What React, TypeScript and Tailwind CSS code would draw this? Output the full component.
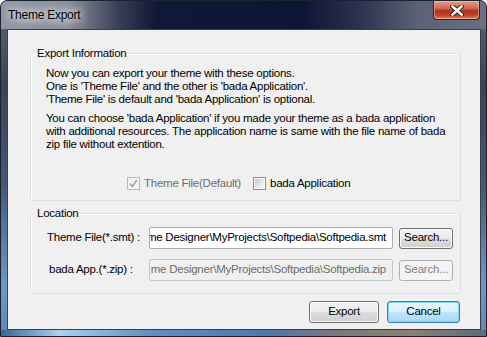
import React from 'react';

const font = "font-['Liberation_Sans',Arial,sans-serif] tracking-[-0.25px]";

function WinButton({ label, primary, disabled, className }: { label: string; primary?: boolean; disabled?: boolean; className: string }) {
  let look =
    'border-[#707070] text-black bg-[linear-gradient(to_bottom,#f2f2f2_0%,#ebebeb_49%,#dddddd_51%,#cfcfcf_100%)] shadow-[inset_0_0_0_1px_#fafafa]';
  if (primary)
    look =
      'border-[#3c7fb1] text-black bg-[linear-gradient(to_bottom,#eaf6fd_0%,#d9f0fc_49%,#bee6fd_51%,#a7d9f5_100%)] shadow-[inset_0_0_0_1px_#7fd3f7]';
  if (disabled) look = 'border-[#adb2b5] text-[#838383] bg-[#f4f4f4]';
  return (
    <div className={`flex items-center justify-center rounded-[3px] border text-[11.5px] ${look} ${className}`}>
      {label}
    </div>
  );
}

function CheckBox({ checked, disabled }: { checked?: boolean; disabled?: boolean }) {
  if (disabled) {
    return (
      <span className="flex h-[13px] w-[13px] items-center justify-center border border-[#bcbcbc] bg-[#f4f4f4]">
        {checked && (
          <svg width="9" height="9" viewBox="0 0 9 9">
            <path d="M1 4.5 L3.5 7.5 L8 1" fill="none" stroke="#a4a4a4" strokeWidth="1.6" />
          </svg>
        )}
      </span>
    );
  }
  return (
    <span className="block h-[13px] w-[13px] border border-[#8e8f8f] bg-white p-[1px]">
      <span className="block h-full w-full bg-[linear-gradient(135deg,#c4c7cc_0%,#eeeeee_70%,#f6f6f6_100%)]" />
    </span>
  );
}

function PathField({ text, disabled }: { text: string; disabled?: boolean }) {
  return (
    <div
      className={`flex h-[22px] w-[244px] shrink-0 items-center justify-end overflow-hidden whitespace-nowrap rounded-[2px] border pr-[6px] ${
        disabled ? 'border-[#c3c7ca] bg-[#f0f0f0] text-[#6d6d6d]' : 'border-[#abadb3] bg-white text-black'
      }`}
    >
      {text}
    </div>
  );
}

export default function App() {
  return (
    <div className={`h-[337px] w-[487px] bg-white text-[11.5px] ${font}`}>
      <div className="flex h-full flex-col overflow-hidden rounded-t-[7px] border border-[#1c2230] bg-[linear-gradient(to_bottom,#616674_0%,#3c4356_25%,#44587a_55%,#6e99c6_85%,#5d88b6_100%)]">
        {/* title bar */}
        <div className="flex h-[28px] items-start justify-between bg-[linear-gradient(to_right,#9296a2_0%,#8a8e9b_14%,#3a4058_24%,#0f1836_32%,#0c1533_62%,#2b3350_74%,#5c6276_86%,#6a6f82_100%)]">
          <div className="mt-[6px] pl-[7px] text-[12px] leading-[16px] text-black [text-shadow:0_0_6px_#e8eaee,0_0_10px_#e8eaee,0_0_14px_#d8dae0]">
            Theme Export
          </div>
          <div className="mr-[6px] flex h-[19px] w-[47px] items-center justify-center rounded-b-[4px] border border-t-0 border-[#4a1a12] bg-[linear-gradient(to_bottom,#e3a08e_0%,#cf6a52_40%,#b4301b_55%,#c0462a_80%,#de8a62_100%)] shadow-[inset_0_0_0_1px_rgba(255,220,200,0.45)]">
            <svg width="14" height="11" viewBox="0 0 14 11">
              <path d="M2.5 1.5 L11.5 9.5 M11.5 1.5 L2.5 9.5" stroke="#3a1a14" strokeWidth="4.6" strokeLinecap="square" />
              <path d="M2.5 1.5 L11.5 9.5 M11.5 1.5 L2.5 9.5" stroke="#ffffff" strokeWidth="2.6" strokeLinecap="square" />
            </svg>
          </div>
        </div>

        {/* client area */}
        <div className="flex pl-[6px] pr-[5px]">
          <div className="h-[301px] w-[474px] border border-[#3a3f4c] bg-[#f0f0f0] text-black">
            <fieldset className="ml-[22px] mt-[16px] w-[431px] rounded-[3px] border border-[#d5dfe5] shadow-[inset_1px_1px_0_#ffffff]">
              <legend className="ml-[3px] px-[3px] leading-[14px]">Export Information</legend>
              <div className="pb-[9px] pl-[15px] pt-[7px] leading-[13px]">
                <p className="whitespace-nowrap">
                  Now you can export your theme with these options.
                  <br />
                  One is 'Theme File' and the other is 'bada Application'.
                  <br />
                  'Theme File' is default and 'bada Application' is optional.
                </p>
                <p className="mt-[6px] whitespace-nowrap">
                  You can choose 'bada Application' if you made your theme as a bada application
                  <br />
                  with additional resources. The application name is same with the file name of bada
                  <br />
                  zip file without extention.
                </p>
                <div className="mt-[25px] flex h-[15px] items-center pl-[81px]">
                  <div className="flex w-[126px] items-center gap-[4px]">
                    <CheckBox checked disabled />
                    <span className="text-[#6d6d6d]">Theme File(Default)</span>
                  </div>
                  <div className="flex items-center gap-[4px]">
                    <CheckBox />
                    <span>bada Application</span>
                  </div>
                </div>
              </div>
            </fieldset>

            <fieldset className="ml-[22px] mt-[5px] w-[431px] rounded-[3px] border border-[#d5dfe5] shadow-[inset_1px_1px_0_#ffffff]">
              <legend className="ml-[3px] px-[3px] leading-[14px]">Location</legend>
              <div className="pb-[12px] pl-[16px] pt-[7px]">
                <div className="flex items-center">
                  <span className="w-[102px] shrink-0 whitespace-nowrap">Theme File(*.smt) :</span>
                  <PathField text="me Designer\MyProjects\Softpedia\Softpedia.smt" />
                  <WinButton label="Search..." className="ml-[6px] h-[21px] w-[54px]" />
                </div>
                <div className="mt-[10px] flex items-center">
                  <span className="w-[102px] shrink-0 whitespace-nowrap pl-[2px]">bada App.(*.zip) :</span>
                  <PathField disabled text="me Designer\MyProjects\Softpedia\Softpedia.zip" />
                  <WinButton label="Search..." disabled className="ml-[6px] h-[21px] w-[54px]" />
                </div>
              </div>
            </fieldset>

            <div className="mt-[7px] flex justify-end gap-[8px] pr-[20px]">
              <WinButton label="Export" className="h-[22px] w-[70px]" />
              <WinButton label="Cancel" primary className="h-[22px] w-[73px]" />
            </div>
          </div>
        </div>

        {/* bottom frame */}
        <div className="h-[6px] bg-[linear-gradient(to_right,#3a6590_0%,#a8d2f2_12%,#6392c2_30%,#4a78a8_55%,#77797e_68%,#8a8070_85%,#5a6a80_100%)]" />
      </div>
    </div>
  );
}
